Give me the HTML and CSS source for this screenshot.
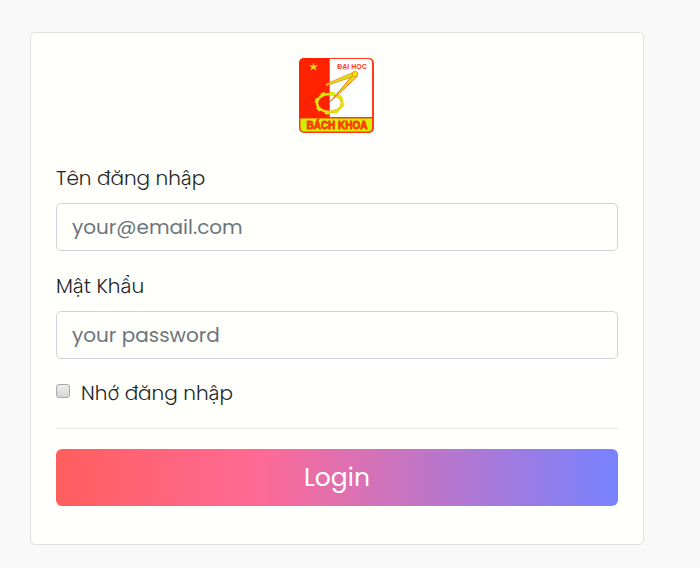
FILE: index.html
```html
<!DOCTYPE html>
<html lang="vi">
<head>
<meta charset="utf-8">
<meta name="viewport" content="width=device-width, initial-scale=1">
<title>Login</title>
<link rel="stylesheet" href="styles.css">
</head>
<body>
<main class="card">
  <svg class="logo" viewBox="0 0 76 75" role="img" aria-label="Đại học Bách Khoa">
    <rect x="0" y="0" width="75" height="75" rx="5" fill="#ff3a14"/>
    <path d="M30.500 1H69a4 4 0 0 1 4 4v54H30.500z" fill="#fff"/>
    <path d="M30.500 0H5a5 5 0 0 0-5 5v55h30.500z" fill="#ff2200"/>
    <path d="M1.500 60.500h71.500v9a4 4 0 0 1-4 4H5.500a4 4 0 0 1-4-4z" fill="#d4f000"/>
    <path d="M14.500 4.500l1 3h3.500l-2.700 1.900 1 3.100-2.800-1.900-2.800 1.900 1-3.100L10 7.500h3.500z" fill="#ffd21c"/>
    <ellipse cx="30.500" cy="45" rx="12.500" ry="9" fill="none" stroke="#ff9a2a" stroke-width="2.600"/>
    <ellipse cx="30.500" cy="45" rx="12.500" ry="9" fill="none" stroke="#d4f000" stroke-width="1.800"/>
    <ellipse cx="30.500" cy="45" rx="14" ry="10.500" fill="none" stroke="#d4ec08" stroke-width="2" stroke-dasharray="4.500 5.200"/>
    <path d="M54 14.500L27 26l.5 1.500L53 19z" fill="#d8e80c" stroke="#ff7a18" stroke-width=".8"/>
    <path d="M53.500 17.500L30.500 44.500 58.500 18z" fill="#d8e80c" stroke="#ff6a18" stroke-width="1"/>
    <circle cx="56" cy="16" r="2.800" fill="#dcee0a" stroke="#ff7a18" stroke-width=".8"/>
    <text class="logo-top" x="53" y="10.500" text-anchor="middle">ĐẠI HỌC</text>
    <text class="logo-name" x="38" y="71" text-anchor="middle">BÁCH KHOA</text>
  </svg>
  <form class="form">
    <div class="field">
      <label for="email">Tên đăng nhập</label>
      <input class="control" id="email" type="email" placeholder="your@email.com">
    </div>
    <div class="field">
      <label for="password">Mật Khẩu</label>
      <input class="control" id="password" type="password" placeholder="your password">
    </div>
    <div class="remember">
      <input class="check" id="remember" type="checkbox">
      <label for="remember">Nhớ đăng nhập</label>
    </div>
    <hr class="rule">
    <button class="submit" type="submit">Login</button>
  </form>
</main>
</body>
</html>
```
FILE: styles.css
```css
* {
  box-sizing: border-box;
}

body {
  margin: 0;
  padding: 32px 56px 23px 30px;
  background: #f9f9f9;
  color: #212529;
  font: 300 20px/30px Poppins, Inter, "Liberation Sans", sans-serif;
}

.card {
  padding: 25px 25px 38px;
  background: #fffffb;
  border: 1px solid #dfdfdc;
  border-radius: 5px;
}

.logo {
  display: block;
  width: 76px;
  height: 75px;
  margin: 0 auto 30px;
}

.logo-top {
  fill: #ff3a1c;
  font: 700 7px "Liberation Sans", sans-serif;
}

.logo-name {
  fill: #ff3a05;
  stroke: #ff3a05;
  stroke-width: .8px;
  font: 700 10px "Liberation Sans", sans-serif;
}

.field {
  display: flex;
  flex-direction: column;
  gap: 10px;
  margin-bottom: 20px;
}

.control {
  width: 100%;
  padding: 8px 15px;
  background: #fffffb;
  border: 1px solid #ced4da;
  border-radius: 5px;
  color: #495057;
  font: inherit;
  font-weight: 400;
  line-height: 30px;
}

.control::placeholder {
  color: #6c757d;
  opacity: 1;
}

.remember {
  display: flex;
  align-items: center;
  gap: 11px;
  line-height: 28px;
}

.check {
  appearance: none;
  width: 14px;
  height: 14px;
  margin: 0 0 4px;
  background: linear-gradient(#ececec, #d6d6d6);
  border: 1px solid #a9a9a9;
  border-radius: 3px;
}

.check:checked {
  background: #7782ff;
}

.rule {
  margin: 21px 0 20px;
  border: 0;
  border-top: 1px solid #e5e5e2;
}

.submit {
  display: block;
  width: 100%;
  padding: 10px 20px;
  border: 0;
  border-radius: 6px;
  background: linear-gradient(to right, #ff5e5e, #ff6a96 36%, #7782ff);
  color: #fff;
  font: inherit;
  font-size: 25px;
  font-weight: 400;
  line-height: 37px;
}
```
